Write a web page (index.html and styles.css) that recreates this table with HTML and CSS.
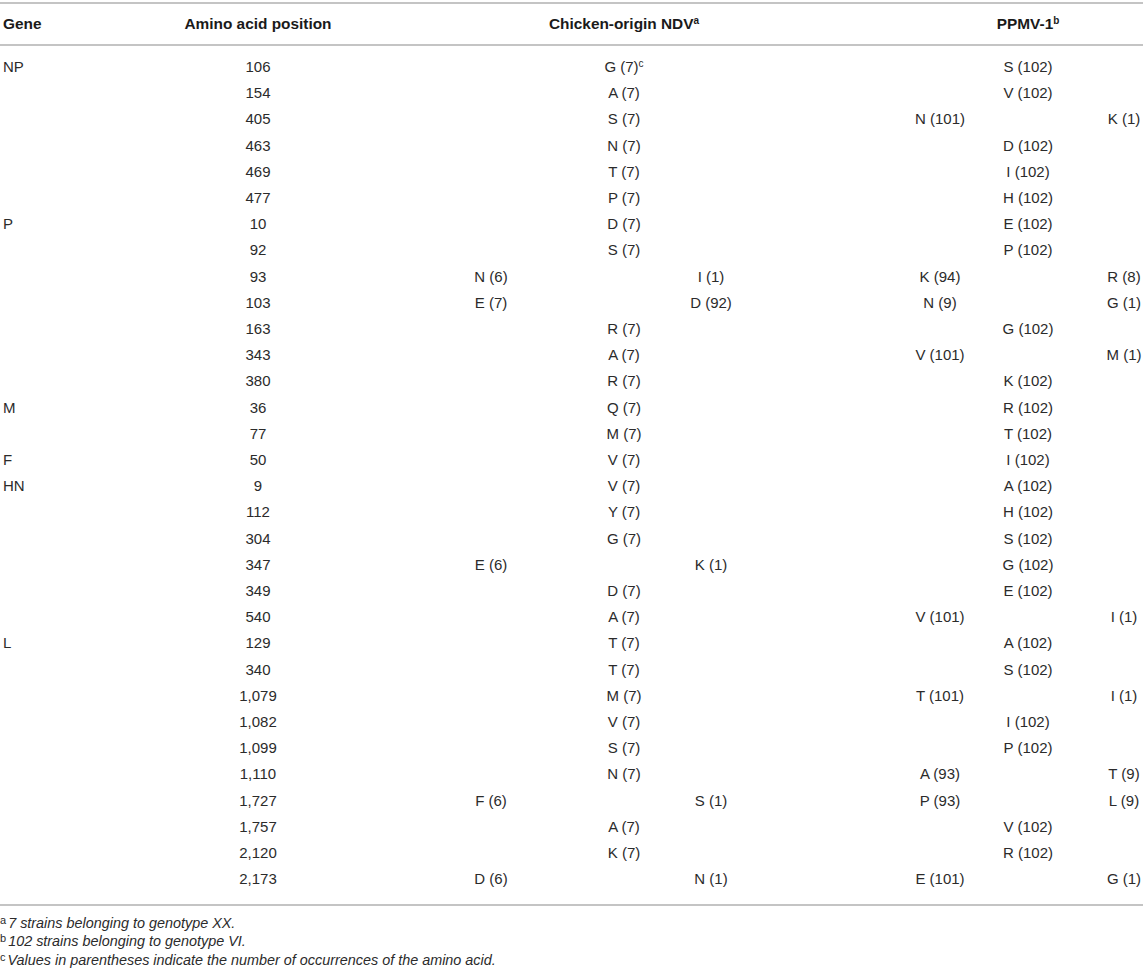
FILE: index.html
```html
<!DOCTYPE html>
<html>
<head>
<meta charset="utf-8">
<link rel="stylesheet" href="styles.css">
</head>
<body>
<div class="frame">
<table class="tbl">
<colgroup>
<col class="c-gene"><col class="c-pos"><col class="c-1"><col class="c-2"><col class="c-3"><col class="c-4">
</colgroup>
<thead>
<tr><th class="left">Gene</th><th>Amino acid position</th><th colspan="2">Chicken-origin NDV<sup>a</sup></th><th colspan="2">PPMV-1<sup>b</sup></th></tr>
</thead>
<tbody>
<tr class="first"><td class="left">NP</td><td>106</td><td colspan="2">G (7)<sup>c</sup></td><td colspan="2">S (102)</td></tr>
<tr><td></td><td>154</td><td colspan="2">A (7)</td><td colspan="2">V (102)</td></tr>
<tr><td></td><td>405</td><td colspan="2">S (7)</td><td>N (101)</td><td>K (1)</td></tr>
<tr><td></td><td>463</td><td colspan="2">N (7)</td><td colspan="2">D (102)</td></tr>
<tr><td></td><td>469</td><td colspan="2">T (7)</td><td colspan="2">I (102)</td></tr>
<tr><td></td><td>477</td><td colspan="2">P (7)</td><td colspan="2">H (102)</td></tr>
<tr><td class="left">P</td><td>10</td><td colspan="2">D (7)</td><td colspan="2">E (102)</td></tr>
<tr><td></td><td>92</td><td colspan="2">S (7)</td><td colspan="2">P (102)</td></tr>
<tr><td></td><td>93</td><td>N (6)</td><td>I (1)</td><td>K (94)</td><td>R (8)</td></tr>
<tr><td></td><td>103</td><td>E (7)</td><td>D (92)</td><td>N (9)</td><td>G (1)</td></tr>
<tr><td></td><td>163</td><td colspan="2">R (7)</td><td colspan="2">G (102)</td></tr>
<tr><td></td><td>343</td><td colspan="2">A (7)</td><td>V (101)</td><td>M (1)</td></tr>
<tr><td></td><td>380</td><td colspan="2">R (7)</td><td colspan="2">K (102)</td></tr>
<tr><td class="left">M</td><td>36</td><td colspan="2">Q (7)</td><td colspan="2">R (102)</td></tr>
<tr><td></td><td>77</td><td colspan="2">M (7)</td><td colspan="2">T (102)</td></tr>
<tr><td class="left">F</td><td>50</td><td colspan="2">V (7)</td><td colspan="2">I (102)</td></tr>
<tr><td class="left">HN</td><td>9</td><td colspan="2">V (7)</td><td colspan="2">A (102)</td></tr>
<tr><td></td><td>112</td><td colspan="2">Y (7)</td><td colspan="2">H (102)</td></tr>
<tr><td></td><td>304</td><td colspan="2">G (7)</td><td colspan="2">S (102)</td></tr>
<tr><td></td><td>347</td><td>E (6)</td><td>K (1)</td><td colspan="2">G (102)</td></tr>
<tr><td></td><td>349</td><td colspan="2">D (7)</td><td colspan="2">E (102)</td></tr>
<tr><td></td><td>540</td><td colspan="2">A (7)</td><td>V (101)</td><td>I (1)</td></tr>
<tr><td class="left">L</td><td>129</td><td colspan="2">T (7)</td><td colspan="2">A (102)</td></tr>
<tr><td></td><td>340</td><td colspan="2">T (7)</td><td colspan="2">S (102)</td></tr>
<tr><td></td><td>1,079</td><td colspan="2">M (7)</td><td>T (101)</td><td>I (1)</td></tr>
<tr><td></td><td>1,082</td><td colspan="2">V (7)</td><td colspan="2">I (102)</td></tr>
<tr><td></td><td>1,099</td><td colspan="2">S (7)</td><td colspan="2">P (102)</td></tr>
<tr><td></td><td>1,110</td><td colspan="2">N (7)</td><td>A (93)</td><td>T (9)</td></tr>
<tr><td></td><td>1,727</td><td>F (6)</td><td>S (1)</td><td>P (93)</td><td>L (9)</td></tr>
<tr><td></td><td>1,757</td><td colspan="2">A (7)</td><td colspan="2">V (102)</td></tr>
<tr><td></td><td>2,120</td><td colspan="2">K (7)</td><td colspan="2">R (102)</td></tr>
<tr class="last"><td></td><td>2,173</td><td>D (6)</td><td>N (1)</td><td>E (101)</td><td>G (1)</td></tr>
</tbody>
</table>
<div class="notes">
<p><sup>a</sup>7 strains belonging to genotype XX.</p>
<p><sup>b</sup>102 strains belonging to genotype VI.</p>
<p><sup>c</sup>Values in parentheses indicate the number of occurrences of the amino acid.</p>
</div>
</div>
</body>
</html>
```

FILE: styles.css
```css
html, body {
  margin: 0;
  padding: 0;
  background: #ffffff;
}
body {
  font-family: "Liberation Sans", Arial, Helvetica, sans-serif;
  color: #2b2b2b;
  overflow: hidden;
}
.frame {
  width: 1143px;
  overflow: hidden;
  padding-top: 2px;
}
.tbl {
  table-layout: fixed;
  width: 1212px;
  border-collapse: collapse;
  font-size: 15px;
}
.c-gene { width: 112px; }
.c-pos { width: 292px; }
.c-1 { width: 174px; }
.c-2 { width: 266px; }
.c-3 { width: 192px; }
.c-4 { width: 176px; }
.tbl th {
  font-weight: bold;
  font-size: 15.4px;
  color: #1a1a1a;
  height: 40px;
  padding: 0;
  text-align: center;
  vertical-align: middle;
  border-top: 2px solid #c4c4c4;
  border-bottom: 2px solid #c4c4c4;
}
.tbl td {
  line-height: 26.2px;
  padding: 0;
  text-align: center;
  vertical-align: middle;
  white-space: nowrap;
}
.tbl .left {
  text-align: left;
  padding-left: 3px;
}
.tbl tr.first td {
  padding-top: 8px;
}
.tbl tr.last td {
  padding-bottom: 11px;
  border-bottom: 2px solid #c4c4c4;
}
.tbl sup {
  font-size: 10px;
  line-height: 0;
  vertical-align: 5px;
}
.notes {
  padding-top: 8px;
  font-size: 14.4px;
  font-style: italic;
  color: #2b2b2b;
}
.notes p {
  margin: 0;
  line-height: 18.5px;
}
.notes sup {
  font-style: normal;
  font-size: 11px;
  line-height: 0;
  vertical-align: 4px;
  margin-right: 2px;
}
```
